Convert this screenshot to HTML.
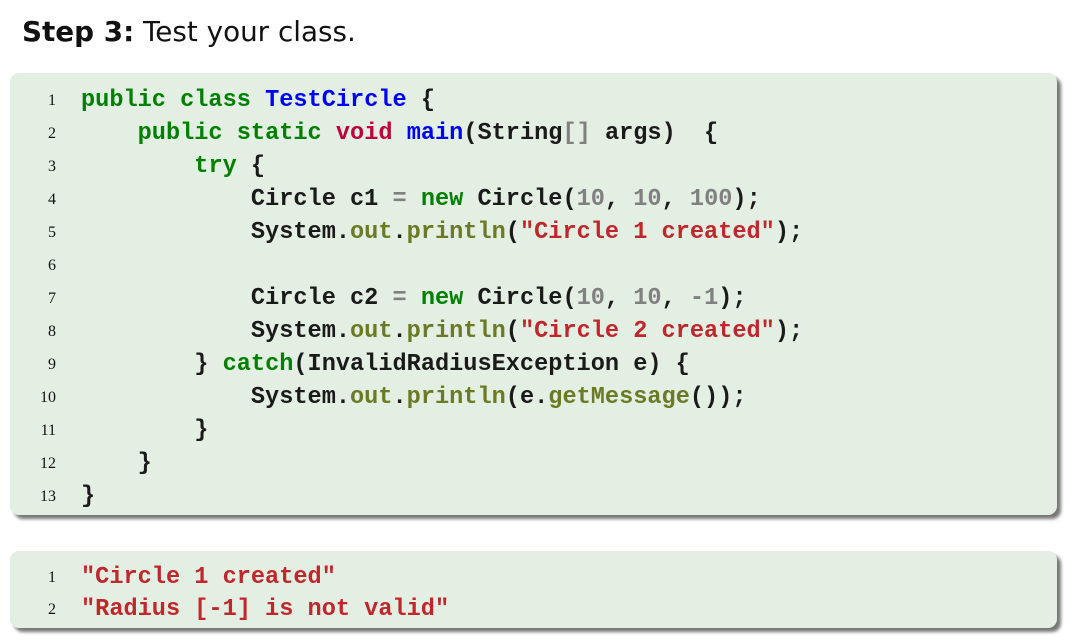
<!DOCTYPE html>
<html><head><meta charset="utf-8"><style>
html,body{margin:0;padding:0;background:#fff;width:1070px;height:642px;overflow:hidden}
.title{position:absolute;left:22px;top:15px;font-family:"DejaVu Sans","Liberation Sans",sans-serif;font-size:27.8px;color:#111}
.box{position:absolute;left:10px;width:1047px;background:#e4efe4;border-radius:9px;box-shadow:4px 4px 3px #777}
.ln{position:absolute;left:0;width:46px;text-align:right;font-family:"Liberation Serif",serif;font-size:16px;color:#111}
.cd{position:absolute;left:71px;font-family:"Liberation Mono",monospace;font-weight:bold;font-size:23.6px;white-space:pre;color:#1a1a1a}
.row{position:absolute;left:0;height:33px;line-height:33px;width:100%}
.k{color:#008000}.b{color:#0000ff}.v{color:#c0003c}.s{color:#c0272d}.n{color:#808080}.o{color:#6b7a24}
</style></head><body>
<div class="title"><b>Step 3:</b> Test your class.</div>
<div class="box" style="top:73px;height:442px">
<div class="row" style="top:11px"><span class="ln">1</span><span class="cd"><span class="k">public class</span> <span class="b">TestCircle</span> {</span></div>
<div class="row" style="top:44px"><span class="ln">2</span><span class="cd">    <span class="k">public static</span> <span class="v">void</span> <span class="b">main</span>(String<span class="n">[]</span> args)  {</span></div>
<div class="row" style="top:77px"><span class="ln">3</span><span class="cd">        <span class="k">try</span> {</span></div>
<div class="row" style="top:110px"><span class="ln">4</span><span class="cd">            Circle c1 <span class="n">=</span> <span class="k">new</span> Circle(<span class="n">10</span>, <span class="n">10</span>, <span class="n">100</span>);</span></div>
<div class="row" style="top:143px"><span class="ln">5</span><span class="cd">            System.<span class="o">out</span>.<span class="o">println</span>(<span class="s">"Circle 1 created"</span>);</span></div>
<div class="row" style="top:176px"><span class="ln">6</span></div>
<div class="row" style="top:209px"><span class="ln">7</span><span class="cd">            Circle c2 <span class="n">=</span> <span class="k">new</span> Circle(<span class="n">10</span>, <span class="n">10</span>, <span class="n">-1</span>);</span></div>
<div class="row" style="top:242px"><span class="ln">8</span><span class="cd">            System.<span class="o">out</span>.<span class="o">println</span>(<span class="s">"Circle 2 created"</span>);</span></div>
<div class="row" style="top:275px"><span class="ln">9</span><span class="cd">        } <span class="k">catch</span>(InvalidRadiusException e) {</span></div>
<div class="row" style="top:308px"><span class="ln">10</span><span class="cd">            System.<span class="o">out</span>.<span class="o">println</span>(e.<span class="o">getMessage</span>());</span></div>
<div class="row" style="top:341px"><span class="ln">11</span><span class="cd">        }</span></div>
<div class="row" style="top:374px"><span class="ln">12</span><span class="cd">    }</span></div>
<div class="row" style="top:407px"><span class="ln">13</span><span class="cd">}</span></div>
</div>
<div class="box" style="top:551px;height:77px">
<div class="row" style="top:10px"><span class="ln">1</span><span class="cd"><span class="s">"Circle 1 created"</span></span></div>
<div class="row" style="top:42px"><span class="ln">2</span><span class="cd"><span class="s">"Radius [-1] is not valid"</span></span></div>
</div>
</body></html>
